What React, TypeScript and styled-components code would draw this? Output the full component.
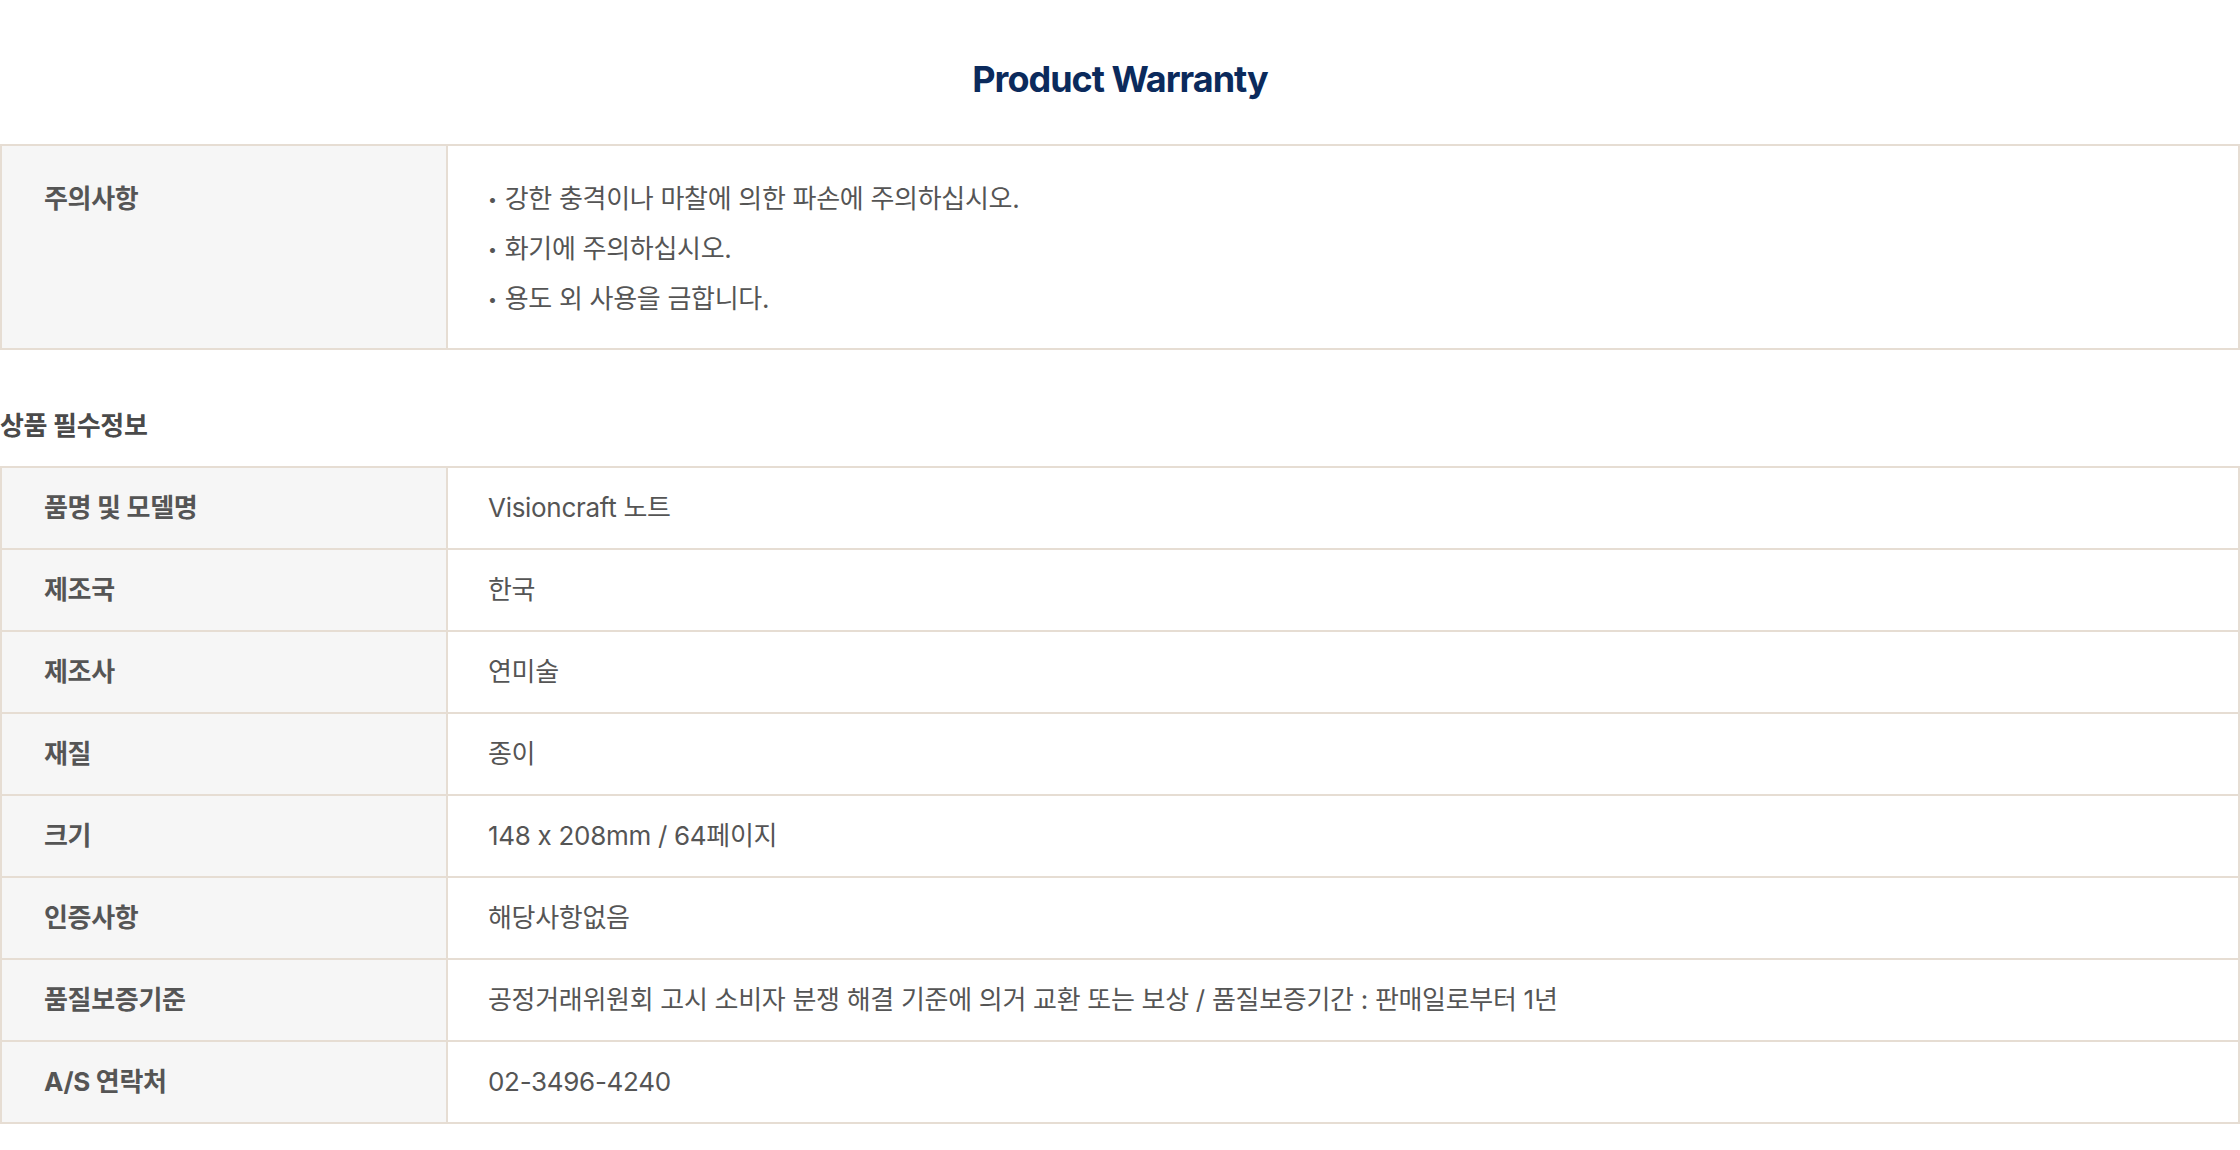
import React from "react";
import styled, { createGlobalStyle } from "styled-components";

const GlobalStyle = createGlobalStyle`
  html, body {
    margin: 0;
    padding: 0;
    background: #ffffff;
  }
  body {
    font-family: Inter, "Noto Sans CJK KR", sans-serif;
    color: #555555;
  }
`;

const Page = styled.div`
  width: 2240px;
  display: flex;
  flex-direction: column;
`;

const Title = styled.h2`
  margin: 0;
  padding-top: 54px;
  height: 144px;
  box-sizing: border-box;
  text-align: center;
  font-family: Inter, "Noto Sans", sans-serif;
  font-weight: 700;
  font-size: 36px;
  line-height: 50px;
  letter-spacing: -1px;
  color: #0b2a5c;
`;

const Table = styled.table`
  width: 100%;
  border-collapse: collapse;
  border: 2px solid #e6ddd3;
  table-layout: fixed;
`;

const Col = styled.col<{ $w?: number }>`
  width: ${(p) => (p.$w ? `${p.$w}px` : "auto")};
`;

const Label = styled.th<{ $top?: boolean }>`
  background: #f6f6f6;
  border: 2px solid #e6ddd3;
  text-align: left;
  vertical-align: ${(p) => (p.$top ? "top" : "middle")};
  padding: ${(p) => (p.$top ? "28px 42px 24px" : "0 42px")};
  height: ${(p) => (p.$top ? "auto" : "80px")};
  font-size: 26px;
  line-height: ${(p) => (p.$top ? "50px" : "36px")};
  font-weight: 700;
  color: #555555;
  letter-spacing: -0.3px;
`;

const Value = styled.td<{ $top?: boolean }>`
  border: 2px solid #e6ddd3;
  text-align: left;
  vertical-align: ${(p) => (p.$top ? "top" : "middle")};
  padding: ${(p) => (p.$top ? "28px 40px 24px" : "0 40px")};
  height: ${(p) => (p.$top ? "auto" : "80px")};
  font-size: 26px;
  line-height: ${(p) => (p.$top ? "50px" : "36px")};
  font-weight: 400;
  color: #555555;
  letter-spacing: -0.3px;
`;

const BulletList = styled.ul`
  list-style: none;
  margin: 0;
  padding: 0;
`;

const Bullet = styled.li`
  display: flex;
  align-items: center;
  &::before {
    content: "•";
    font-size: 16px;
    margin-right: 8px;
  }
`;

const SectionHeading = styled.h3`
  margin: 0;
  padding-top: 58px;
  height: 116px;
  box-sizing: border-box;
  font-size: 26px;
  line-height: 36px;
  font-weight: 700;
  color: #4a4a4a;
  letter-spacing: -0.3px;
`;

const cautions = [
  "강한 충격이나 마찰에 의한 파손에 주의하십시오.",
  "화기에 주의하십시오.",
  "용도 외 사용을 금합니다.",
];

const info: [string, string][] = [
  ["품명 및 모델명", "Visioncraft 노트"],
  ["제조국", "한국"],
  ["제조사", "연미술"],
  ["재질", "종이"],
  ["크기", "148 x 208mm / 64페이지"],
  ["인증사항", "해당사항없음"],
  ["품질보증기준", "공정거래위원회 고시 소비자 분쟁 해결 기준에 의거 교환 또는 보상 / 품질보증기간 : 판매일로부터 1년"],
  ["A/S 연락처", "02-3496-4240"],
];

export default function App() {
  return (
    <Page>
      <GlobalStyle />
      <Title>Product Warranty</Title>
      <Table>
        <colgroup>
          <Col $w={446} />
          <Col />
        </colgroup>
        <tbody>
          <tr>
            <Label $top>주의사항</Label>
            <Value $top>
              <BulletList>
                {cautions.map((c) => (
                  <Bullet key={c}>{c}</Bullet>
                ))}
              </BulletList>
            </Value>
          </tr>
        </tbody>
      </Table>
      <SectionHeading>상품 필수정보</SectionHeading>
      <Table>
        <colgroup>
          <Col $w={446} />
          <Col />
        </colgroup>
        <tbody>
          {info.map(([k, v]) => (
            <tr key={k}>
              <Label>{k}</Label>
              <Value>{v}</Value>
            </tr>
          ))}
        </tbody>
      </Table>
    </Page>
  );
}
